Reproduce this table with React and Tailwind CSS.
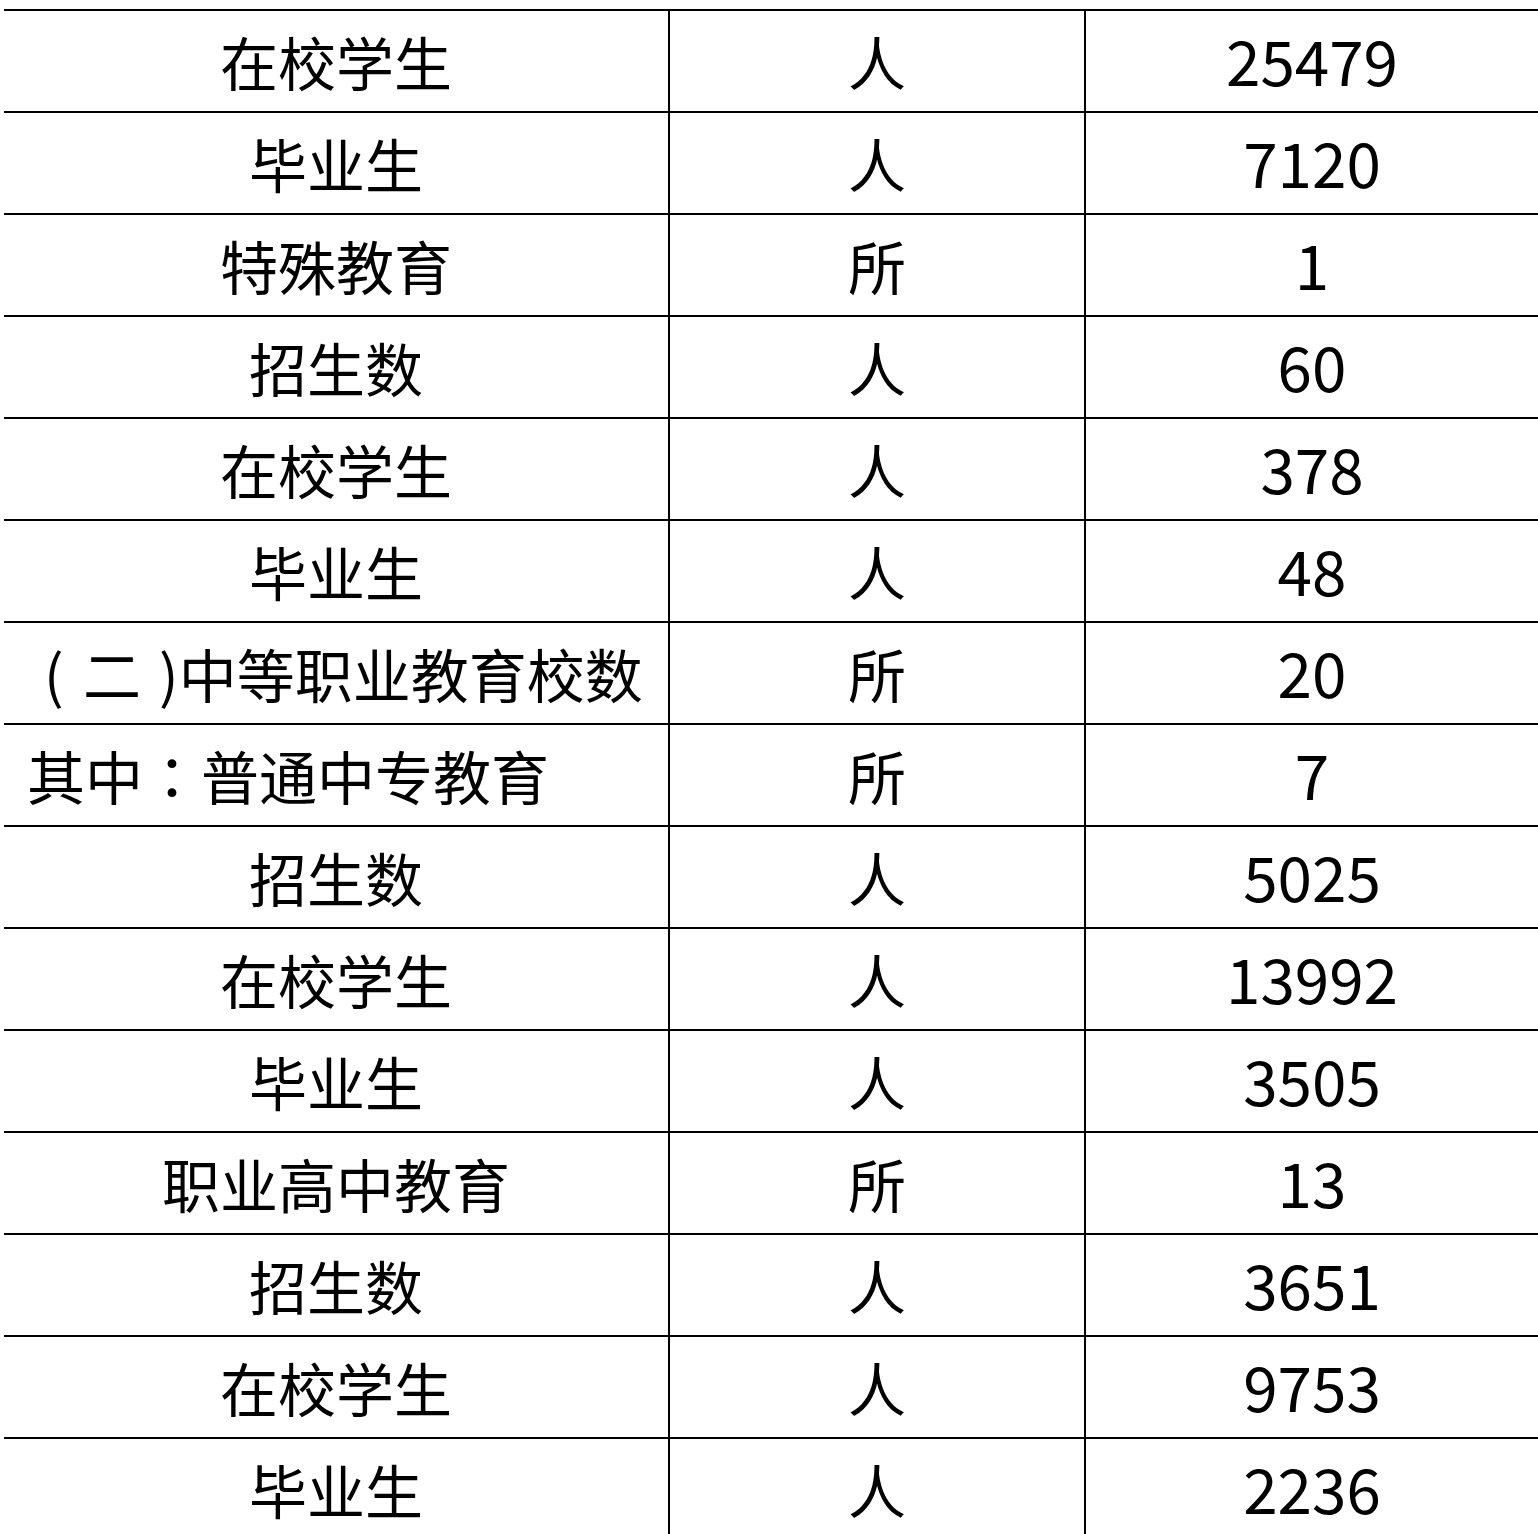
import React from "react";

const rows = [
  ["在校学生", "人", "25479"],
  ["毕业生", "人", "7120"],
  ["特殊教育", "所", "1"],
  ["招生数", "人", "60"],
  ["在校学生", "人", "378"],
  ["毕业生", "人", "48"],
  ["paren", "所", "20"],
  ["colon", "所", "7"],
  ["招生数", "人", "5025"],
  ["在校学生", "人", "13992"],
  ["毕业生", "人", "3505"],
  ["职业高中教育", "所", "13"],
  ["招生数", "人", "3651"],
  ["在校学生", "人", "9753"],
  ["毕业生", "人", "2236"],
];

function First({ v }) {
  if (v === "paren") {
    return (
      <div className="border-r-2 border-black flex items-center justify-start pl-[40px] whitespace-nowrap">
        <span className="inline-block w-[39px]">(</span>
        <span className="inline-block mr-[18px]">二</span>
        <span>)</span>
        <span>中等职业教育校数</span>
      </div>
    );
  }
  if (v === "colon") {
    return (
      <div className="border-r-2 border-black flex items-center justify-start pl-[23px] whitespace-nowrap">
        <span>
          其中<span className="font-['Noto_Sans_CJK_TC',sans-serif]">：</span>普通中专教育
        </span>
      </div>
    );
  }
  return (
    <div className="border-r-2 border-black flex items-center justify-center whitespace-nowrap">
      {v}
    </div>
  );
}

export default function App() {
  return (
    <div className="w-[1538px] h-[1534px] overflow-hidden bg-white text-black">
      <div className="ml-[4px] mt-[9px] text-[58px] leading-none font-['Noto_Sans_CJK_SC',sans-serif]">
        {rows.map((r, i) => (
          <div
            key={i}
            className="grid grid-cols-[666px_416px_1fr] h-[102px] border-t-2 border-black"
          >
            <First v={r[0]} />
            <div className="border-r-2 border-black flex items-center justify-center">
              {r[1]}
            </div>
            <div className="flex items-center justify-center pb-[5px] text-[62px]">
              {r[2]}
            </div>
          </div>
        ))}
      </div>
    </div>
  );
}
